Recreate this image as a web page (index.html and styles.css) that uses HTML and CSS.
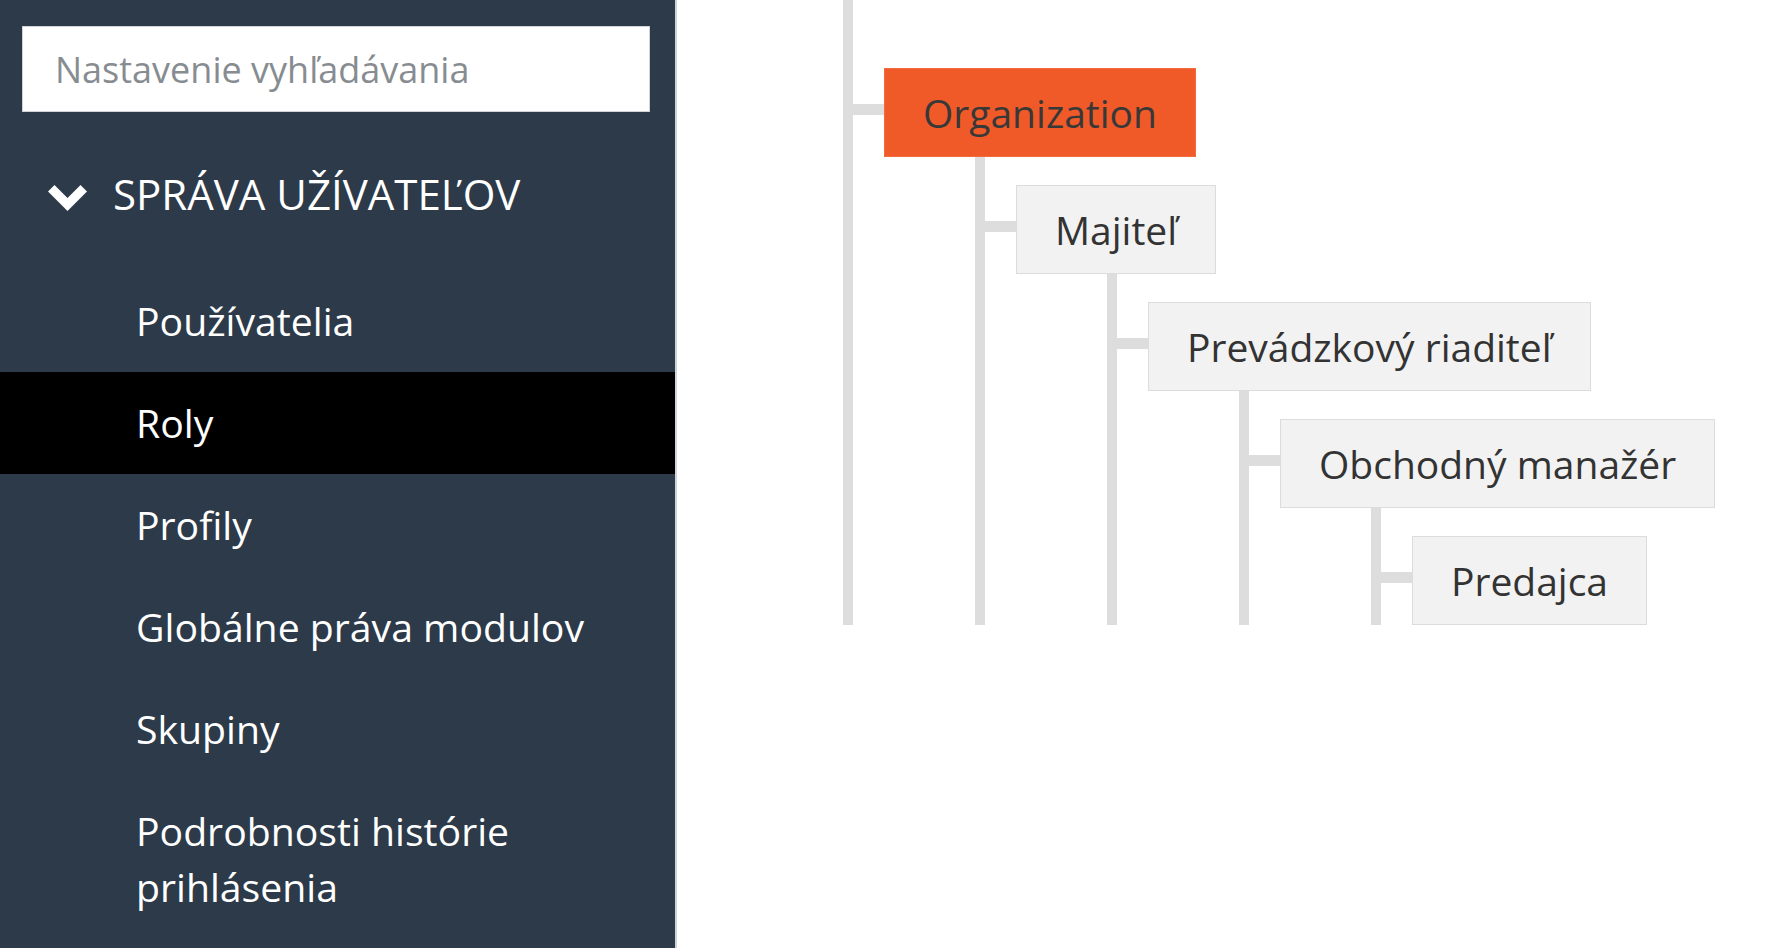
FILE: index.html
```html
<!DOCTYPE html>
<html lang="sk">
<head>
<meta charset="utf-8">
<title>Roly</title>
<link rel="stylesheet" href="styles.css">
</head>
<body>
<div class="page">
  <aside class="sidebar">
    <div class="search">
      <input class="search-input" type="text" placeholder="Nastavenie vyhľadávania">
    </div>
    <div class="section-head">
      <svg class="chevron" width="39" height="26" viewBox="0 0 39 26" aria-hidden="true">
        <polygon points="0,6.5 6.5,0 19.5,13 32.5,0 39,6.5 19.5,26" fill="#ffffff"/>
      </svg>
      <span class="section-title">SPRÁVA UŽÍVATEĽOV</span>
    </div>
    <ul class="menu">
      <li class="menu-item">Používatelia</li>
      <li class="menu-item is-active">Roly</li>
      <li class="menu-item">Profily</li>
      <li class="menu-item">Globálne práva modulov</li>
      <li class="menu-item">Skupiny</li>
      <li class="menu-item">Podrobnosti histórie prihlásenia</li>
    </ul>
  </aside>
  <main class="content">
    <ul class="tree tree-root">
      <li>
        <div class="tree-row"><span class="conn"></span><span class="node node-active">Organization</span></div>
        <ul class="tree tree-sub">
          <li>
            <div class="tree-row"><span class="conn"></span><span class="node">Majiteľ</span></div>
            <ul class="tree tree-sub">
              <li>
                <div class="tree-row"><span class="conn"></span><span class="node">Prevádzkový riaditeľ</span></div>
                <ul class="tree tree-sub">
                  <li>
                    <div class="tree-row"><span class="conn"></span><span class="node">Obchodný manažér</span></div>
                    <ul class="tree tree-sub">
                      <li>
                        <div class="tree-row"><span class="conn"></span><span class="node">Predajca</span></div>
                      </li>
                    </ul>
                  </li>
                </ul>
              </li>
            </ul>
          </li>
        </ul>
      </li>
    </ul>
  </main>
</div>
</body>
</html>
```
FILE: styles.css
```css
html, body {
  margin: 0;
  padding: 0;
  background: #ffffff;
}

body {
  font-family: "Open Sans", "Noto Sans", "DejaVu Sans", sans-serif;
  color: #333333;
}

.page {
  display: flex;
  height: 948px;
  overflow: hidden;
}

.sidebar {
  width: 675px;
  flex: 0 0 675px;
  background: #2c3a49;
  border-right: 2px solid #cfd4da;
  color: #ffffff;
  height: 100%;
}

.search {
  padding: 26px 25px 0 22px;
}

.search-input {
  display: block;
  box-sizing: border-box;
  width: 628px;
  height: 86px;
  margin: 0;
  padding: 0 30px 0 32px;
  border: 1px solid #cfd3d7;
  background: #ffffff;
  font-family: "Open Sans", "Noto Sans", sans-serif;
  font-size: 36px;
  color: #333333;
  outline: none;
}

.search-input::placeholder {
  color: #878c91;
  opacity: 1;
}

.section-head {
  display: flex;
  align-items: center;
  padding: 54px 0 48px 48px;
}

.chevron {
  display: block;
  flex: 0 0 auto;
  margin-top: 8px;
  margin-right: 26px;
}

.section-title {
  font-size: 42px;
  line-height: 56px;
  color: #ffffff;
  white-space: nowrap;
}

.menu {
  list-style: none;
  margin: 0;
  padding: 0;
}

.menu-item {
  padding: 23px 20px 23px 136px;
  font-size: 39.2px;
  line-height: 56px;
  color: #ffffff;
}

.menu-item.is-active {
  background: #000000;
}

.content {
  flex: 1 1 auto;
  padding-left: 166px;
}

.tree {
  list-style: none;
  margin: 0;
  padding: 0;
  border-left: 10px solid #dddddd;
}

.tree-root {
  padding-top: 68px;
  display: inline-block;
}

.tree-sub {
  margin-left: 122px;
  padding-top: 28px;
}

.tree-row {
  display: flex;
  align-items: flex-start;
}

.conn {
  display: block;
  flex: 0 0 31px;
  width: 31px;
  height: 11px;
  margin-top: 36px;
  background: #dddddd;
}

.node {
  display: block;
  box-sizing: border-box;
  height: 89px;
  padding: 16px 38px;
  border: 1px solid #dcdcdc;
  background: #f2f2f2;
  font-size: 39px;
  line-height: 55px;
  color: #333333;
  white-space: nowrap;
}

.node-active {
  background: #f05a28;
  border-color: #f26a3d;
  color: #383838;
}
```
